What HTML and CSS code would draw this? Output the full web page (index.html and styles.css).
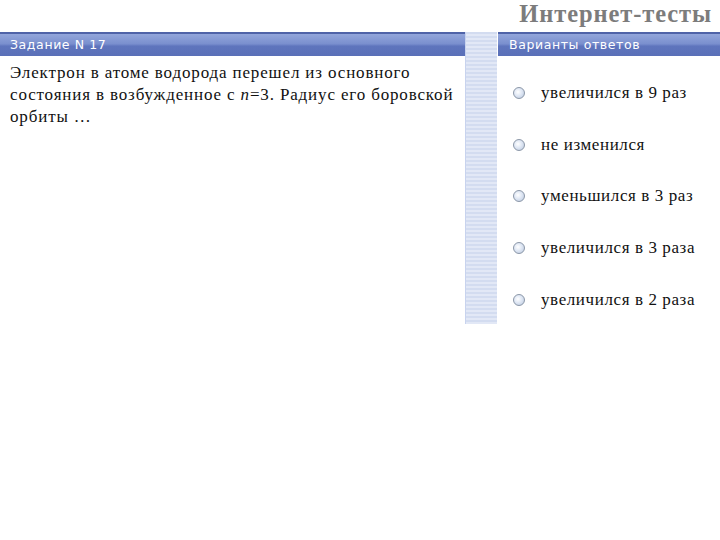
FILE: index.html
```html
<!DOCTYPE html>
<html lang="ru">
<head>
<meta charset="utf-8">
<link rel="stylesheet" href="styles.css">
</head>
<body>
<div class="page">
  <div class="top"><span class="brand">Интернет-тесты</span></div>
  <div class="main">
    <div class="col-left">
      <div class="bar">Задание N 17</div>
      <div class="question">Электрон в атоме водорода перешел из основного<br>состояния в возбужденное с <i>n</i>=3. Радиус его боровской<br>орбиты …</div>
    </div>
    <div class="sep"></div>
    <div class="col-right">
      <div class="bar">Варианты ответов</div>
      <ul class="answers">
        <li><span class="radio"></span>увеличился в 9 раз</li>
        <li><span class="radio"></span>не изменился</li>
        <li><span class="radio"></span>уменьшился в 3 раз</li>
        <li><span class="radio"></span>увеличился в 3 раза</li>
        <li><span class="radio"></span>увеличился в 2 раза</li>
      </ul>
    </div>
  </div>
</div>
</body>
</html>
```
FILE: styles.css
```css
html, body {
  margin: 0;
  padding: 0;
  background: #fff;
}
.page {
  width: 720px;
  height: 540px;
  font-family: "Liberation Serif", "Times New Roman", serif;
}
.top {
  height: 32px;
  display: flex;
  justify-content: flex-end;
  align-items: flex-start;
  padding-right: 8px;
  box-sizing: border-box;
}
.brand {
  font-size: 24.5px;
  font-weight: bold;
  color: #7c7c7c;
  line-height: 28px;
  letter-spacing: 0.9px;
}
.main {
  display: flex;
  align-items: flex-start;
}
.col-left {
  width: 465px;
}
.sep {
  width: 32px;
  height: 292px;
  background-color: #d9e1f3;
  background-image: repeating-linear-gradient(to bottom, #d3dcf0 0, #d3dcf0 2px, #e2e8f6 2px, #e2e8f6 4px);
  border-left: 1px solid #c8d3ee;
  box-sizing: border-box;
}
.col-right {
  flex: 1;
  padding-left: 1px;
}
.col-right .bar {
  padding-left: 11px;
}
.bar {
  height: 24px;
  box-sizing: border-box;
  border-top: 2px solid #4f63a8;
  background: linear-gradient(to bottom, #93a6db 0%, #7a8fce 45%, #5f75bd 55%, #5a70b8 100%);
  color: #fff;
  font-family: "DejaVu Sans", "Liberation Sans", sans-serif;
  font-size: 12.5px;
  line-height: 22px;
  padding-left: 10px;
  letter-spacing: 0.6px;
}
.question {
  padding: 6px 0 0 10px;
  font-size: 17px;
  line-height: 22px;
  color: #111;
  letter-spacing: 0.85px;
  white-space: nowrap;
}
.answers {
  list-style: none;
  margin: 0;
  padding: 25px 0 0 15px;
}
.answers li {
  display: flex;
  align-items: center;
  height: 24px;
  margin: 0 0 27.7px 0;
  font-size: 17px;
  color: #111;
  letter-spacing: 0.6px;
  white-space: nowrap;
}
.radio {
  width: 10px;
  height: 10px;
  border-radius: 50%;
  border: 1px solid #8b97a8;
  background: radial-gradient(circle at 40% 40%, #ffffff 0, #dfe7f4 45%, #b8c6dc 100%);
  margin-right: 16px;
  flex: none;
}
```
